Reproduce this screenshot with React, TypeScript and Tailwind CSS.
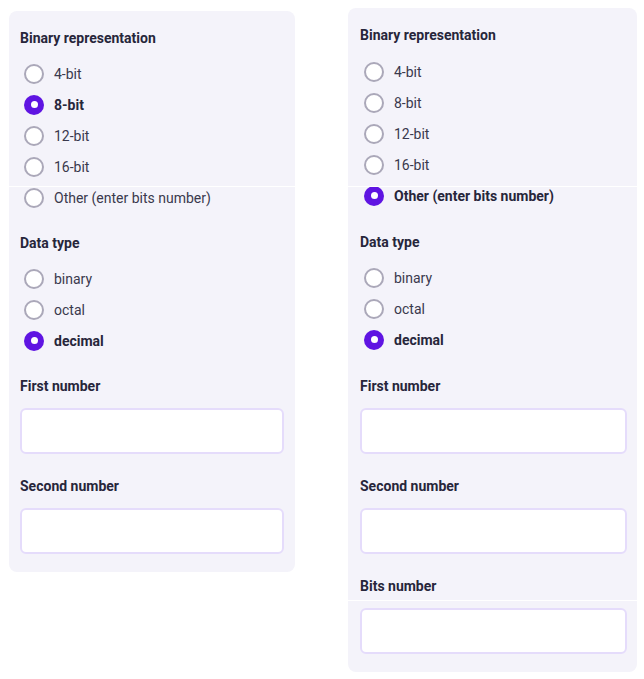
import React from 'react';

type Option = { label: string; checked?: boolean };

const Radio = ({ label, checked }: Option) => (
  <label className="flex h-[31px] items-center gap-[10px] pl-1">
    {checked ? (
      <span className="flex h-5 w-5 items-center justify-center rounded-full bg-[#5f14e2]">
        <span className="h-[7px] w-[7px] rounded-full bg-white" />
      </span>
    ) : (
      <span className="h-5 w-5 rounded-full border-2 border-[#aba8b9] bg-white" />
    )}
    <span className={checked ? 'font-bold text-[#27263b]' : 'text-[#3a394d]'}>{label}</span>
  </label>
);

const Heading = ({ children }: { children: React.ReactNode }) => (
  <p className="h-5 font-bold leading-5 text-[#27263b]">{children}</p>
);

const Field = ({ label, className }: { label: string; className: string }) => (
  <div className={className}>
    <Heading>{label}</Heading>
    <input
      type="text"
      className="mt-3 box-border h-[46px] w-full rounded-md border-2 border-[#e5dcfb] bg-white outline-none"
    />
  </div>
);

interface PanelProps {
  bits: Option[];
  extra?: boolean;
  className: string;
}

const Panel = ({ bits, extra, className }: PanelProps) => (
  <div className={`rounded-lg bg-[#f4f3fa] pt-[17px] pb-[18px] ${className}`}>
    <Heading>Binary representation</Heading>
    <div className={extra ? 'mt-[11px]' : 'mt-[10px]'}>
      {bits.map((b) => (
        <Radio key={b.label} {...b} />
      ))}
    </div>
    <div className={extra ? 'mt-[21px]' : 'mt-5'}>
      <Heading>Data type</Heading>
      <div className="mt-[10px]">
        <Radio label="binary" />
        <Radio label="octal" />
        <Radio label="decimal" checked />
      </div>
    </div>
    <Field label="First number" className={extra ? 'mt-[21px]' : 'mt-5'} />
    <Field label="Second number" className="mt-[22px]" />
    {extra && <Field label="Bits number" className="mt-[22px]" />}
  </div>
);

const labels = ['4-bit', '8-bit', '12-bit', '16-bit', 'Other (enter bits number)'];

export default function App() {
  return (
    <div className="relative flex min-h-[679px] w-[644px] items-start bg-white text-sm font-['Roboto','Liberation_Sans',sans-serif]">
      <Panel
        className="ml-[9px] mt-[11px] w-[286px] px-[11px]"
        bits={labels.map((l) => ({ label: l, checked: l === '8-bit' }))}
      />
      <Panel
        className="ml-[53px] mt-[8px] w-[289px] pl-[12px] pr-[10px]"
        extra
        bits={labels.map((l) => ({ label: l, checked: l.startsWith('Other') }))}
      />
      {/* seams from the stitched capture */}
      <div className="absolute left-0 right-0 top-[186px] h-px bg-white" />
      <div className="absolute left-[348px] right-0 top-[600px] h-px bg-white" />
    </div>
  );
}
